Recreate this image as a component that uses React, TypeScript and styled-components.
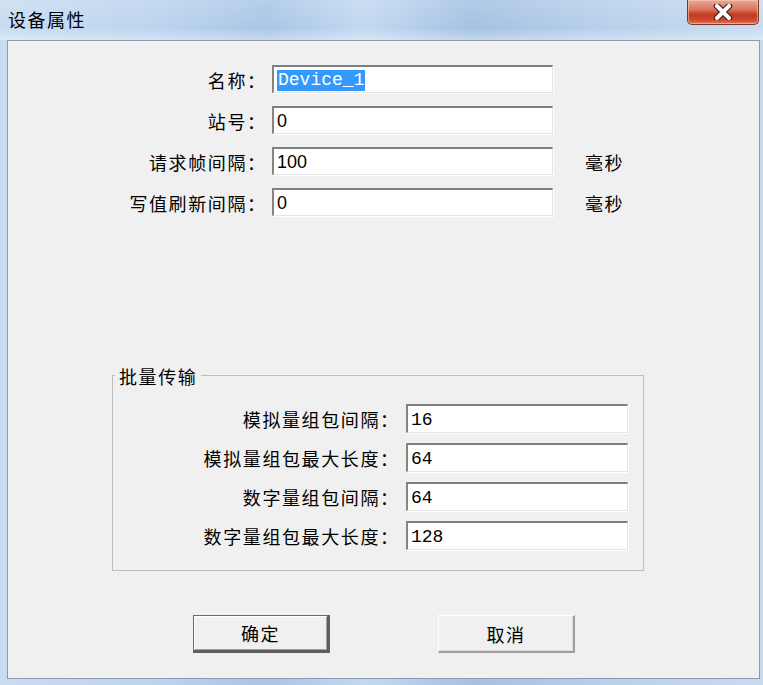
import React from "react";
import styled, { createGlobalStyle } from "styled-components";

const GlobalStyle = createGlobalStyle`
    html, body {
        margin: 0;
        padding: 0;
        overflow: hidden;
    }
    body {
        font-family: "Noto Sans CJK SC", "Liberation Sans", sans-serif;
    }
`;

interface Field {
    label: string;
    value: string;
    unit?: string;
    mono?: boolean;
    selected?: boolean;
}

const mainFields: Field[] = [
    { label: "名称：", value: "Device_1", mono: true, selected: true },
    { label: "站号：", value: "0" },
    { label: "请求帧间隔：", value: "100", unit: "毫秒" },
    { label: "写值刷新间隔：", value: "0", unit: "毫秒" },
];

const batchFields: Field[] = [
    { label: "模拟量组包间隔：", value: "16", mono: true },
    { label: "模拟量组包最大长度：", value: "64", mono: true },
    { label: "数字量组包间隔：", value: "64", mono: true },
    { label: "数字量组包最大长度：", value: "128", mono: true },
];

const CloseIcon = () => (
    <svg width="22" height="16" viewBox="0 0 22 16">
        <path
            d="M5 2 L17 14 M17 2 L5 14"
            stroke="#4a1c14"
            strokeWidth="6.4"
            strokeLinecap="round"
        />
        <path
            d="M5 2 L17 14 M17 2 L5 14"
            stroke="#ffffff"
            strokeWidth="4"
            strokeLinecap="round"
        />
    </svg>
);

const App: React.FC = () => {
    return (
        <>
            <GlobalStyle />
            <Window>
                <TitleBar>
                    <Title>设备属性</Title>
                    <CloseButton>
                        <CloseIcon />
                    </CloseButton>
                </TitleBar>
                <Client>
                    <MainForm>
                        {mainFields.map((f) => (
                            <React.Fragment key={f.label}>
                                <Label>{f.label}</Label>
                                <TextBox mono={f.mono}>
                                    {f.selected ? <Selected>{f.value}</Selected> : f.value}
                                </TextBox>
                                <Unit>{f.unit ?? ""}</Unit>
                            </React.Fragment>
                        ))}
                    </MainForm>

                    <GroupBox>
                        <Caption>批量传输</Caption>
                        <GroupForm>
                            {batchFields.map((f) => (
                                <React.Fragment key={f.label}>
                                    <Label>{f.label}</Label>
                                    <TextBox mono={f.mono}>{f.value}</TextBox>
                                </React.Fragment>
                            ))}
                        </GroupForm>
                    </GroupBox>

                    <ButtonRow>
                        <Button isDefault>确定</Button>
                        <Button>取消</Button>
                    </ButtonRow>
                </Client>
            </Window>
        </>
    );
};

export default App;

// styles
const Window = styled.div`
    width: 763px;
    height: 685px;
    display: flex;
    flex-direction: column;
    background: linear-gradient(
        90deg,
        #c8ddf2 0%,
        #bcd4ee 20%,
        #a9c6e6 35%,
        #c2d9f1 48%,
        #a4c1e3 62%,
        #b6cfea 78%,
        #c7dcf1 100%
    );
`;

const TitleBar = styled.div`
    height: 40px;
    display: flex;
    align-items: flex-start;
    padding-left: 8px;
    background: linear-gradient(180deg, rgba(255, 255, 255, 0.15) 0%, rgba(255, 255, 255, 0) 70%, rgba(255, 255, 255, 0.35) 100%);
`;

const Title = styled.div`
    font-size: 18px;
    line-height: 40px;
    letter-spacing: 1.5px;
    color: #000000;
    margin-top: -1px;
`;

const CloseButton = styled.div`
    margin-left: auto;
    margin-right: 4px;
    width: 72px;
    height: 25px;
    box-sizing: border-box;
    display: flex;
    align-items: center;
    justify-content: center;
    border: 1px solid #7a3526;
    border-top: none;
    border-radius: 0 0 5px 5px;
    background: linear-gradient(180deg, #e8a996 0%, #d9745d 40%, #c43b22 60%, #cc4c31 85%, #e07a5f 100%);
    box-shadow: inset 0 0 0 1px rgba(255, 210, 190, 0.55);
`;

const Client = styled.div`
    flex: 1;
    margin: 0 3px 6px 7px;
    border: 1px solid #8d9cad;
    background-color: #f0f0f0;
    display: flex;
    flex-direction: column;
    padding-top: 24px;
`;

const MainForm = styled.div`
    display: grid;
    grid-template-columns: 257px 281px 1fr;
    grid-auto-rows: 28px;
    column-gap: 7px;
    row-gap: 13px;
`;

const Label = styled.div`
    text-align: right;
    font-size: 18px;
    letter-spacing: 1.6px;
    margin-right: -1.6px;
    line-height: 30px;
    color: #000000;
    white-space: nowrap;
`;

const TextBox = styled.div<{ mono?: boolean }>`
    box-sizing: border-box;
    height: 100%;
    background: #ffffff;
    border-style: solid;
    border-width: 2px 1px 1px 2px;
    border-color: #7f7f7f #e4e4e4 #e4e4e4 #858585;
    box-shadow: 1px 1px 0 #ffffff;
    padding: 2px 0 0 3px;
    display: flex;
    align-items: center;
    font-family: ${(p) => (p.mono ? '"Liberation Mono", monospace' : '"Liberation Sans", sans-serif')};
    font-size: 18px;
    color: #000000;
`;

const Selected = styled.span`
    background: #3399ff;
    color: #ffffff;
    line-height: 21px;
    padding: 0 1px;
`;

const Unit = styled.div`
    padding-left: 25px;
    font-size: 18px;
    letter-spacing: 1.6px;
    line-height: 30px;
    color: #000000;
`;

const GroupBox = styled.div`
    margin: 159px 0 0 104px;
    width: 532px;
    box-sizing: border-box;
    border: 1px solid #bdbdbd;
    padding-bottom: 20px;
`;

const Caption = styled.div`
    width: fit-content;
    margin: -12px 0 0 2px;
    padding: 0 4px;
    background-color: #f0f0f0;
    font-size: 18px;
    letter-spacing: 1.6px;
    line-height: 24px;
    color: #000000;
`;

const GroupForm = styled.div`
    margin-top: 16px;
    display: grid;
    grid-template-columns: 285px 222px;
    grid-auto-rows: 29px;
    column-gap: 8px;
    row-gap: 10px;
`;

const ButtonRow = styled.div`
    margin: 44px 0 0 185px;
    display: flex;
    gap: 108px;
`;

const Button = styled.div<{ isDefault?: boolean }>`
    width: 137px;
    height: 38px;
    box-sizing: border-box;
    display: flex;
    align-items: center;
    justify-content: center;
    background-color: #f0f0f0;
    font-size: 18px;
    letter-spacing: 1.6px;
    color: #000000;
    border-style: solid;
    border-width: ${(p) => (p.isDefault ? "1px 3px 3px 1px" : "1px 2px 2px 1px")};
    border-color: ${(p) =>
        p.isDefault ? "#6a6a6a #5f5f5f #5f5f5f #6a6a6a" : "#ffffff #a0a0a0 #a0a0a0 #ffffff"};
    box-shadow: ${(p) =>
        p.isDefault ? "inset 1px 1px 0 #ffffff, inset -1px -1px 0 #a0a0a0" : "inset -1px -1px 0 #dcdcdc"};
`;
